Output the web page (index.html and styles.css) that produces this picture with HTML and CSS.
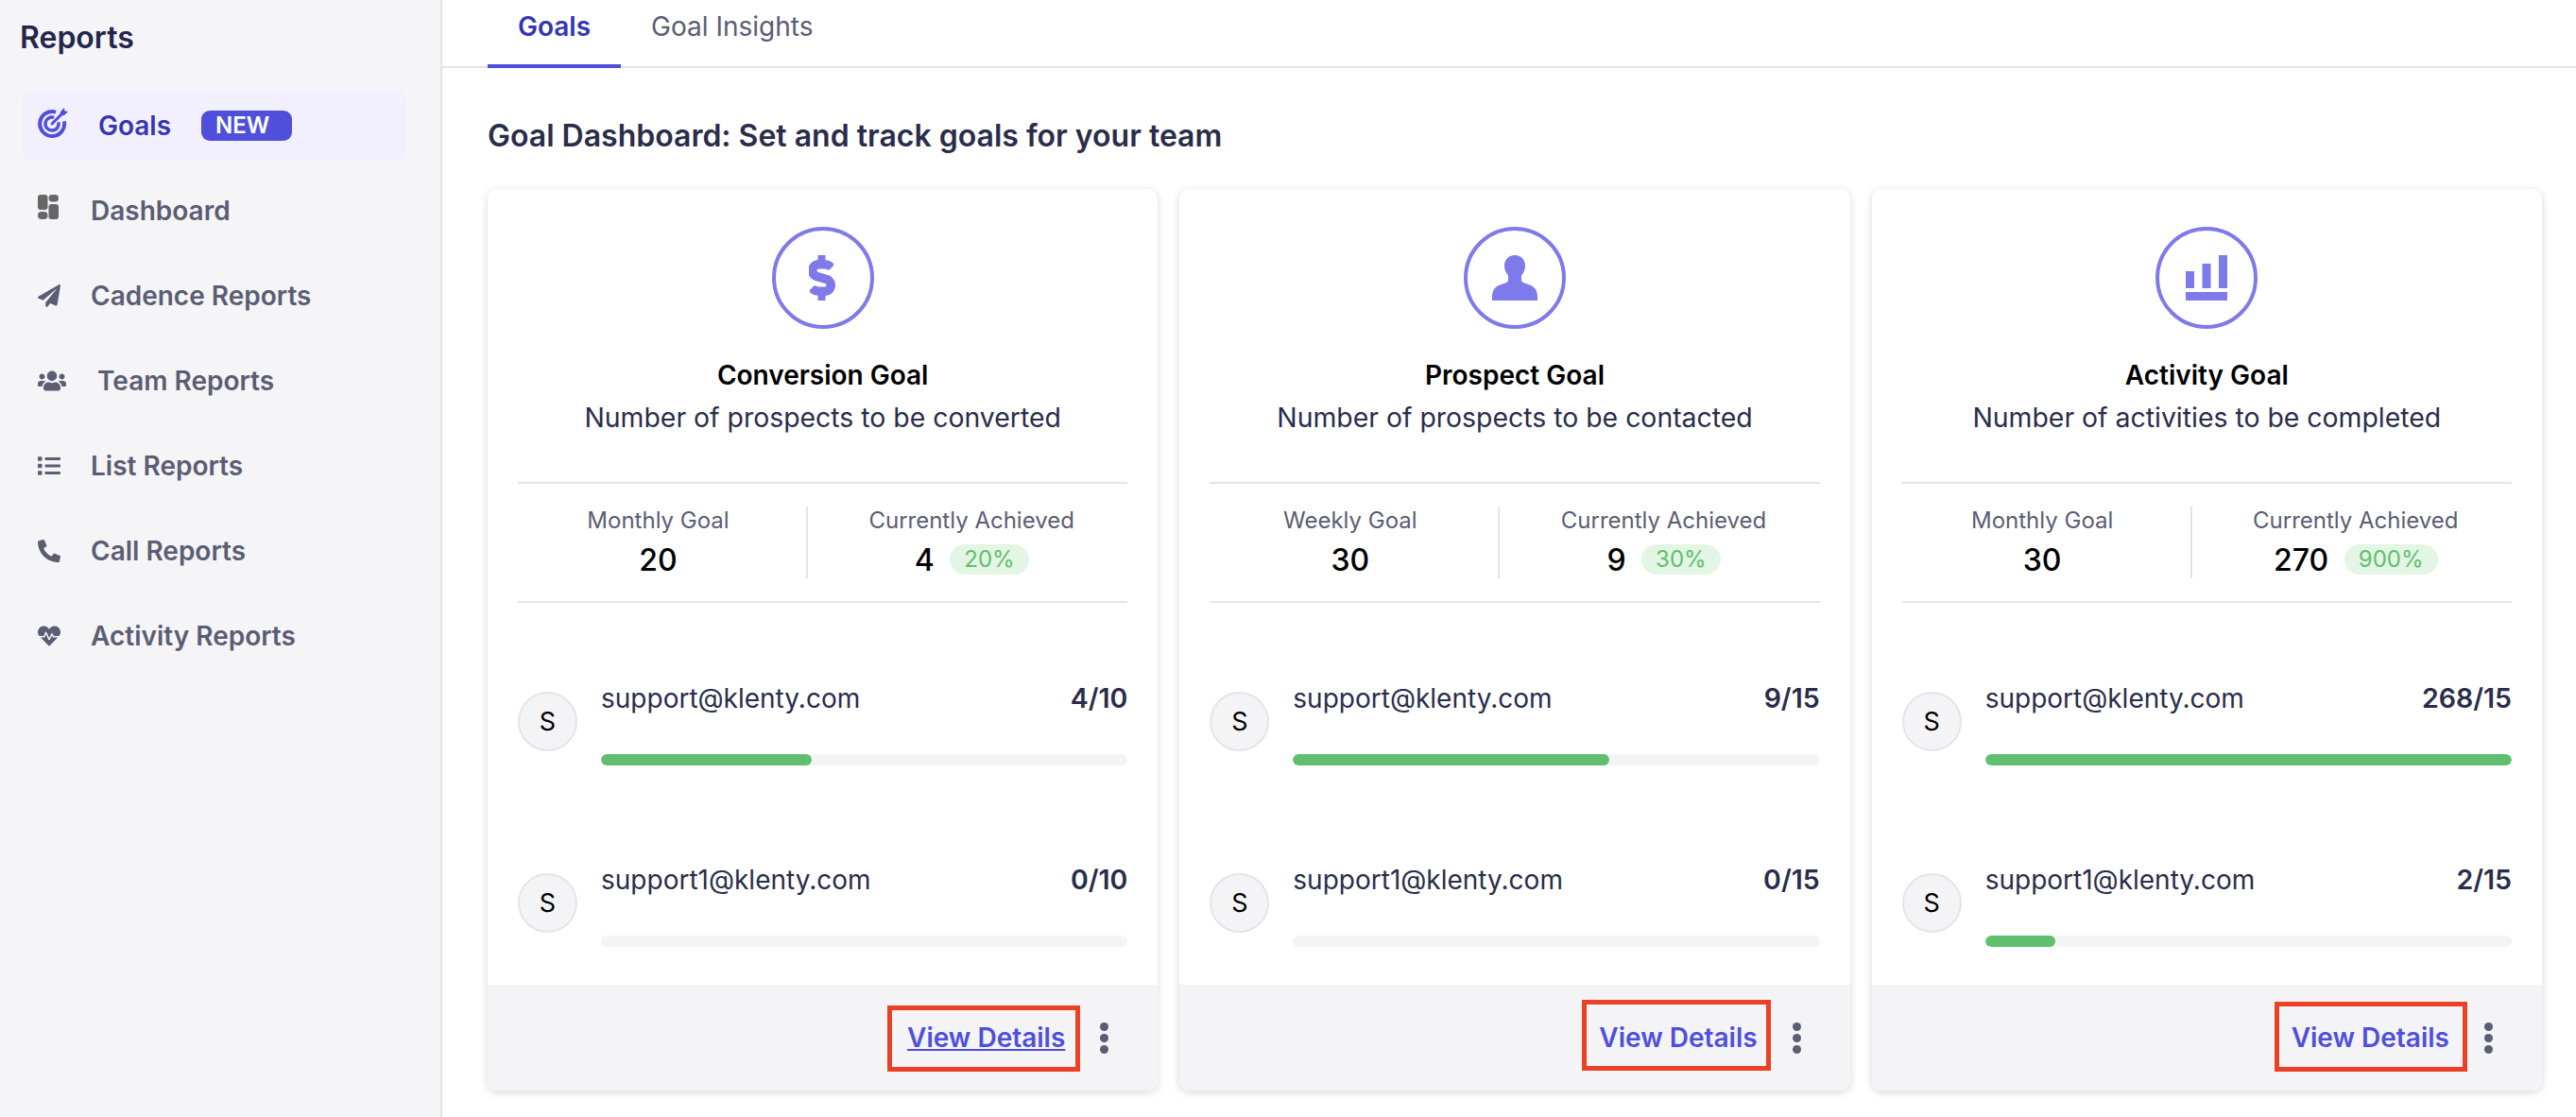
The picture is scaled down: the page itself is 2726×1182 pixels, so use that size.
FILE: index.html
```html
<!DOCTYPE html>
<html lang="en">
<head>
    <meta charset="UTF-8">
    <meta name="viewport" content="width=device-width, initial-scale=1.0">
    <title>Reports - Goals</title>
    <link rel="stylesheet" href="styles.css">
</head>
<body>
    <aside class="sidebar">
        <h1 class="sidebar-title">Reports</h1>
        <nav class="side-nav">
            <a class="nav-item active">
                <span class="nav-icon goals-icon">
                    <svg width="32" height="32" viewBox="0 0 32 32" fill="none" stroke="currentColor">
                        <path d="M27.9 14.3A13 13 0 1 1 19.1 4.6" stroke-width="4"/>
                        <path d="M21.8 15.3A7 7 0 1 1 17.2 10.4" stroke-width="3.400"/>
                        <path d="M15 17L26 6" stroke-width="3" stroke-linecap="round"/>
                        <path d="M23 8L24.5 3.5 28 0 28.5 3.5 32 4 28.5 7.5 24 9z" fill="currentColor" stroke="none"/>
                    </svg>
                </span>
                <span>Goals</span>
                <span class="badge">NEW</span>
            </a>
            <a class="nav-item">
                <span class="nav-icon dash-icon">
                    <svg width="22" height="26" viewBox="0 0 22 26" fill="currentColor">
                        <rect x="0" y="0" width="10.5" height="16" rx="3"/>
                        <rect x="0" y="18" width="10.5" height="8" rx="4"/>
                        <rect x="11.5" y="0" width="10.5" height="7.5" rx="3.7"/>
                        <rect x="11.5" y="10" width="10.5" height="16" rx="3"/>
                    </svg>
                </span>
                <span>Dashboard</span>
            </a>
            <a class="nav-item">
                <span class="nav-icon">
                    <svg width="24" height="24" viewBox="0 0 512 512" fill="currentColor"><path d="M476 3.2L12.5 270.6c-18.1 10.4-15.8 35.6 2.2 43.2L121 358.4l287.3-253.2c5.5-4.9 13.3 2.6 8.6 8.3L176 407v80.5c0 23.6 28.5 32.9 42.5 15.8L282 426l124.6 52.2c14.2 6 30.4-2.9 33-18.2l72-432C515 7.8 493.3-6.8 476 3.2z"/></svg>
                </span>
                <span>Cadence Reports</span>
            </a>
            <a class="nav-item">
                <span class="nav-icon team-icon">
                    <svg width="30" height="24" viewBox="0 0 640 512" fill="currentColor"><path d="M96 224c35.3 0 64-28.7 64-64s-28.7-64-64-64-64 28.7-64 64 28.7 64 64 64zm448 0c35.3 0 64-28.7 64-64s-28.7-64-64-64-64 28.7-64 64 28.7 64 64 64zm32 32h-64c-17.6 0-33.5 7.1-45.1 18.6 40.3 22.1 68.9 62 75.1 109.4h66c17.7 0 32-14.3 32-32v-32c0-35.3-28.7-64-64-64zm-256 0c61.9 0 112-50.1 112-112S381.9 32 320 32 208 82.1 208 144s50.1 112 112 112zm76.8 32h-8.3c-20.8 10-43.9 16-68.5 16s-47.6-6-68.5-16h-8.3C179.6 288 128 339.6 128 403.2V432c0 26.5 21.5 48 48 48h288c26.5 0 48-21.5 48-48v-28.8c0-63.6-51.6-115.2-115.2-115.2zm-223.7-13.4C161.5 263.1 145.6 256 128 256H64c-35.3 0-64 28.7-64 64v32c0 17.7 14.3 32 32 32h65.9c6.3-47.4 34.9-87.3 75.2-109.4z"/></svg>
                </span>
                <span>Team Reports</span>
            </a>
            <a class="nav-item">
                <span class="nav-icon">
                    <svg width="24" height="24" viewBox="0 0 512 512" fill="currentColor"><path d="M80 368H16a16 16 0 0 0-16 16v64a16 16 0 0 0 16 16h64a16 16 0 0 0 16-16v-64a16 16 0 0 0-16-16zm0-320H16A16 16 0 0 0 0 64v64a16 16 0 0 0 16 16h64a16 16 0 0 0 16-16V64a16 16 0 0 0-16-16zm0 160H16a16 16 0 0 0-16 16v64a16 16 0 0 0 16 16h64a16 16 0 0 0 16-16v-64a16 16 0 0 0-16-16zm416 176H176a16 16 0 0 0-16 16v32a16 16 0 0 0 16 16h320a16 16 0 0 0 16-16v-32a16 16 0 0 0-16-16zm0-320H176a16 16 0 0 0-16 16v32a16 16 0 0 0 16 16h320a16 16 0 0 0 16-16V80a16 16 0 0 0-16-16zm0 160H176a16 16 0 0 0-16 16v32a16 16 0 0 0 16 16h320a16 16 0 0 0 16-16v-32a16 16 0 0 0-16-16z"/></svg>
                </span>
                <span>List Reports</span>
            </a>
            <a class="nav-item">
                <span class="nav-icon">
                    <svg width="24" height="24" viewBox="0 0 512 512" fill="currentColor"><path d="M497.39 361.8l-112-48a24 24 0 0 0-28 6.9l-49.6 60.6A370.66 370.66 0 0 1 130.6 204.11l60.6-49.6a23.94 23.94 0 0 0 6.9-28l-48-112A24.16 24.16 0 0 0 122.6.61l-104 24A24 24 0 0 0 0 48c0 256.5 207.9 464 464 464a24 24 0 0 0 23.4-18.6l24-104a24.29 24.29 0 0 0-14.01-27.6z"/></svg>
                </span>
                <span>Call Reports</span>
            </a>
            <a class="nav-item">
                <span class="nav-icon">
                    <svg width="24" height="24" viewBox="0 0 512 512" fill="currentColor"><path d="M320.2 243.8l-49.7 99.4c-6 12.1-23.4 11.7-28.9-.6l-56.9-126.3-30 71.7H60.6l182.5 186.5c7.1 7.3 18.6 7.3 25.7 0L451.4 288H342.3l-22.1-44.2zM473.7 73.9l-2.4-2.5c-51.5-52.6-135.8-52.6-187.4 0L256 100l-27.9-28.5c-51.5-52.7-135.9-52.7-187.4 0l-2.4 2.4C-10.4 123.7-12.5 203 31 256h102.4l35.9-86.2c5.4-12.9 23.6-13.2 29.4-.4l58.2 129.3 49-97.9c5.9-11.8 22.7-11.8 28.6 0l27.6 55.2H481c43.5-53 41.4-132.3-7.3-182.1z"/></svg>
                </span>
                <span>Activity Reports</span>
            </a>
        </nav>
    </aside>

    <div class="main">
        <div class="tabs">
            <a class="tab active">Goals</a>
            <a class="tab">Goal Insights</a>
        </div>
        <div class="content">
            <h2 class="page-title">Goal Dashboard: Set and track goals for your team</h2>
            <div class="cards">

                <section class="card">
                    <div class="goal-circle">
                        <svg width="30" height="48" viewBox="0 0 320 512" fill="currentColor" stroke="currentColor" stroke-width="22"><path d="M209.2 233.4l-108-31.6C88.7 198.2 80 186.5 80 173.5c0-16.3 13.2-29.5 29.5-29.5h66.3c12.2 0 24.2 3.7 34.2 10.5 6.1 4.1 14.3 3.1 19.5-2l34.8-34c7.1-6.9 6.1-18.4-1.8-24.5C238 74.8 207.4 64.1 176 64V16c0-8.8-7.2-16-16-16h-32c-8.8 0-16 7.2-16 16v48h-2.5C45.8 64-5.4 118.7.5 183.6c4.2 46.1 39.4 83.6 83.8 96.6l102.5 30c12.5 3.7 21.2 15.3 21.2 28.3 0 16.3-13.2 29.5-29.5 29.5h-66.3C100 368 88 364.3 78 357.5c-6.1-4.1-14.3-3.1-19.5 2l-34.8 34c-7.1 6.9-6.1 18.4 1.8 24.5 24.5 19.2 55.1 29.9 86.5 30v48c0 8.8 7.2 16 16 16h32c8.8 0 16-7.2 16-16v-48.2c46.6-.9 90.3-28.6 105.7-72.7 21.5-61.6-14.6-124.8-72.5-141.7z"/></svg>
                    </div>
                    <h3 class="card-title">Conversion Goal</h3>
                    <p class="card-sub">Number of prospects to be converted</p>
                    <div class="stats">
                        <div class="stat stat-left">
                            <div class="stat-label">Monthly Goal</div>
                            <div class="stat-value">20</div>
                        </div>
                        <div class="stat stat-right">
                            <div class="stat-label">Currently Achieved</div>
                            <div class="stat-value">4 <span class="pill">20%</span></div>
                        </div>
                    </div>
                    <div class="user-row">
                        <div class="avatar">S</div>
                        <div class="user-body">
                            <div class="user-line"><span>support@klenty.com</span><b>4/10</b></div>
                            <div class="bar"><div class="bar-fill" style="width: 40%"></div></div>
                        </div>
                    </div>
                    <div class="user-row">
                        <div class="avatar">S</div>
                        <div class="user-body">
                            <div class="user-line"><span>support1@klenty.com</span><b>0/10</b></div>
                            <div class="bar"><div class="bar-fill" style="width: 0%"></div></div>
                        </div>
                    </div>
                    <div class="card-footer">
                        <a class="details underlined">View Details</a>
                        <span class="dots"><i></i><i></i><i></i></span>
                        <span class="mark mark-one"></span>
                    </div>
                </section>

                <section class="card">
                    <div class="goal-circle">
                        <svg width="48" height="48" viewBox="0 0 48 48" fill="currentColor"><path d="M24 0c6 0 11 4.500 11 11 0 4-1.500 8-4 10.500V26c0 1.500.8 2.500 2 3l8 3c4.500 2 7 6 7 12v4H0v-4c0-6 2.500-10 7-12l8-3c1.200-.5 2-1.500 2-3v-4.500C14.500 19 13 15 13 11 13 4.500 18 0 24 0z"/></svg>
                    </div>
                    <h3 class="card-title">Prospect Goal</h3>
                    <p class="card-sub">Number of prospects to be contacted</p>
                    <div class="stats">
                        <div class="stat stat-left">
                            <div class="stat-label">Weekly Goal</div>
                            <div class="stat-value">30</div>
                        </div>
                        <div class="stat stat-right">
                            <div class="stat-label">Currently Achieved</div>
                            <div class="stat-value">9 <span class="pill">30%</span></div>
                        </div>
                    </div>
                    <div class="user-row">
                        <div class="avatar">S</div>
                        <div class="user-body">
                            <div class="user-line"><span>support@klenty.com</span><b>9/15</b></div>
                            <div class="bar"><div class="bar-fill" style="width: 60%"></div></div>
                        </div>
                    </div>
                    <div class="user-row">
                        <div class="avatar">S</div>
                        <div class="user-body">
                            <div class="user-line"><span>support1@klenty.com</span><b>0/15</b></div>
                            <div class="bar"><div class="bar-fill" style="width: 0%"></div></div>
                        </div>
                    </div>
                    <div class="card-footer">
                        <a class="details">View Details</a>
                        <span class="dots"><i></i><i></i><i></i></span>
                        <span class="mark mark-two"></span>
                    </div>
                </section>

                <section class="card">
                    <div class="goal-circle">
                        <svg width="44" height="48" viewBox="0 0 44 48" fill="currentColor">
                            <rect x="0" y="17" width="9" height="18"/>
                            <rect x="17.500" y="9" width="9" height="26"/>
                            <rect x="35" y="0" width="9" height="35"/>
                            <rect x="0" y="39" width="44" height="9"/>
                        </svg>
                    </div>
                    <h3 class="card-title">Activity Goal</h3>
                    <p class="card-sub">Number of activities to be completed</p>
                    <div class="stats">
                        <div class="stat stat-left">
                            <div class="stat-label">Monthly Goal</div>
                            <div class="stat-value">30</div>
                        </div>
                        <div class="stat stat-right">
                            <div class="stat-label">Currently Achieved</div>
                            <div class="stat-value">270 <span class="pill">900%</span></div>
                        </div>
                    </div>
                    <div class="user-row">
                        <div class="avatar">S</div>
                        <div class="user-body">
                            <div class="user-line"><span>support@klenty.com</span><b>268/15</b></div>
                            <div class="bar"><div class="bar-fill" style="width: 100%"></div></div>
                        </div>
                    </div>
                    <div class="user-row">
                        <div class="avatar">S</div>
                        <div class="user-body">
                            <div class="user-line"><span>support1@klenty.com</span><b>2/15</b></div>
                            <div class="bar"><div class="bar-fill" style="width: 13.3%"></div></div>
                        </div>
                    </div>
                    <div class="card-footer">
                        <a class="details">View Details</a>
                        <span class="dots"><i></i><i></i><i></i></span>
                        <span class="mark mark-three"></span>
                    </div>
                </section>

            </div>
        </div>
    </div>
</body>
</html>
```
FILE: styles.css
```css
* {
    box-sizing: border-box;
}
body {
    margin: 0;
    display: flex;
    min-height: 1182px;
    font-family: Inter, "Noto Sans", sans-serif;
    background-color: #fff;
    color: #2a2d4a;
}

/* sidebar */
.sidebar {
    width: 468px;
    flex-shrink: 0;
    padding-top: 22px;
    background-color: #f5f5f8;
    border-right: 2px solid #e4e4e8;
}
.sidebar-title {
    margin: 0 0 38px 21px;
    font-size: 32px;
    line-height: 36px;
    font-weight: 600;
    color: #23264a;
}
.side-nav {
    display: flex;
    flex-direction: column;
    gap: 16px;
    margin: 0 36px 0 24px;
}
.nav-item {
    display: flex;
    align-items: center;
    height: 74px;
    padding-left: 16px;
    border-radius: 10px;
    font-size: 28px;
    font-weight: 600;
    color: #5b5d73;
}
.nav-item.active {
    background-color: #f2f0fe;
    color: #3535b5;
}
.nav-icon {
    display: flex;
    align-items: center;
    width: 56px;
    flex-shrink: 0;
}
.goals-icon {
    width: 64px;
    margin-bottom: 6px;
    color: #4f4fdc;
}
.dash-icon {
    margin-bottom: 8px;
    color: #666;
}
.team-icon {
    width: 63px;
}
.badge {
    width: 96px;
    height: 32px;
    margin-left: 32px;
    padding-left: 15px;
    border-radius: 9px;
    background-color: #4f4fdc;
    color: #fff;
    font-size: 24px;
    line-height: 32px;
    font-weight: 600;
}

/* tabs */
.main {
    flex: 1;
    min-width: 0;
}
.tabs {
    display: flex;
    height: 72px;
    padding-left: 48px;
    border-bottom: 2px solid #e4e4e8;
}
.tab {
    height: 72px;
    padding: 12px 32px 0;
    font-size: 28px;
    line-height: 32px;
    color: #5b5d73;
}
.tab.active {
    border-bottom: 4px solid #4f4fdc;
    color: #3535b5;
    font-weight: 600;
}

/* goal cards */
.content {
    padding: 54px 36px 28px 48px;
}
.page-title {
    margin: 0 0 38px;
    font-size: 32px;
    line-height: 36px;
    font-weight: 600;
    color: #2a2d4a;
}
.cards {
    display: grid;
    grid-template-columns: repeat(3, 1fr);
    gap: 23px;
}
.card {
    display: flex;
    flex-direction: column;
    height: 954px;
    padding-top: 40px;
    border-radius: 10px;
    background-color: #fff;
    box-shadow: 0 2px 8px rgba(40, 40, 70, 0.18);
    overflow: hidden;
}
.goal-circle {
    display: flex;
    align-items: center;
    justify-content: center;
    width: 108px;
    height: 108px;
    margin: 0 auto;
    border: 4px solid #7f7ae9;
    border-radius: 50%;
    color: #7f7ae9;
}
.card-title {
    margin: 32px 0 0;
    text-align: center;
    font-size: 28px;
    line-height: 34px;
    font-weight: 600;
    color: #000;
}
.card-sub {
    margin: 11px 0 0;
    text-align: center;
    font-size: 28.400px;
    line-height: 34px;
    color: #2a2d4a;
}
.stats {
    display: flex;
    margin: 51px 32px 0;
    padding: 24px 0;
    border-top: 2px solid #e4e4e8;
    border-bottom: 2px solid #e4e4e8;
}
.stat {
    height: 76px;
    text-align: center;
}
.stat-left {
    width: 307px;
    padding-right: 8px;
    border-right: 2px solid #e4e4e8;
}
.stat-right {
    flex: 1;
    padding-left: 8px;
}
.stat-label {
    font-size: 24px;
    line-height: 30px;
    color: #5b5d73;
}
.stat-value {
    margin-top: 10px;
    font-size: 32px;
    line-height: 34px;
    font-weight: 500;
    color: #000;
}
.pill {
    display: inline-block;
    height: 32px;
    margin-left: 8px;
    padding: 0 15px;
    border-radius: 16px;
    background-color: #e3f5e4;
    color: #5fbf6e;
    font-size: 24px;
    line-height: 32px;
    font-weight: 400;
    vertical-align: top;
}
.user-row {
    display: flex;
    align-items: flex-start;
    gap: 25px;
    height: 85px;
    margin: 107px 32px 0;
}
.stats + .user-row {
    margin-top: 87px;
}
.avatar {
    display: flex;
    align-items: center;
    justify-content: center;
    flex-shrink: 0;
    width: 63px;
    height: 63px;
    margin-top: 7px;
    border: 2px solid #e4e4ea;
    border-radius: 50%;
    background-color: #f4f4f7;
    font-size: 27px;
    color: #000;
}
.user-body {
    flex: 1;
}
.user-line {
    display: flex;
    justify-content: space-between;
    height: 61px;
    font-size: 28px;
    line-height: 28px;
}
.user-line b {
    font-size: 28.500px;
    font-weight: 600;
}
.bar {
    height: 12px;
    margin-top: 12px;
    border-radius: 6px;
    background-color: #f4f4f6;
    overflow: hidden;
}
.bar-fill {
    height: 100%;
    border-radius: 6px;
    background-color: #5fbf6e;
}
.card-footer {
    position: relative;
    display: flex;
    align-items: center;
    justify-content: flex-end;
    height: 112px;
    margin-top: auto;
    padding-right: 52px;
    background-color: #f4f4f7;
}
.details {
    margin-right: 37px;
    font-size: 28px;
    font-weight: 600;
    color: #4f4fdc;
}
.details.underlined {
    text-decoration: underline;
}
.dots {
    display: flex;
    flex-direction: column;
    gap: 3px;
}
.dots i {
    width: 9px;
    height: 9px;
    border-radius: 50%;
    background-color: #5b5d73;
}

/* red annotation boxes drawn over the screenshot */
.mark {
    position: absolute;
    border: 5px solid #ea4025;
}
.mark-one {
    top: 22px;
    right: 82px;
    width: 204px;
    height: 70px;
}
.mark-two {
    top: 16px;
    right: 84px;
    width: 200px;
    height: 75px;
}
.mark-three {
    top: 18px;
    right: 79px;
    width: 204px;
    height: 74px;
}
```
